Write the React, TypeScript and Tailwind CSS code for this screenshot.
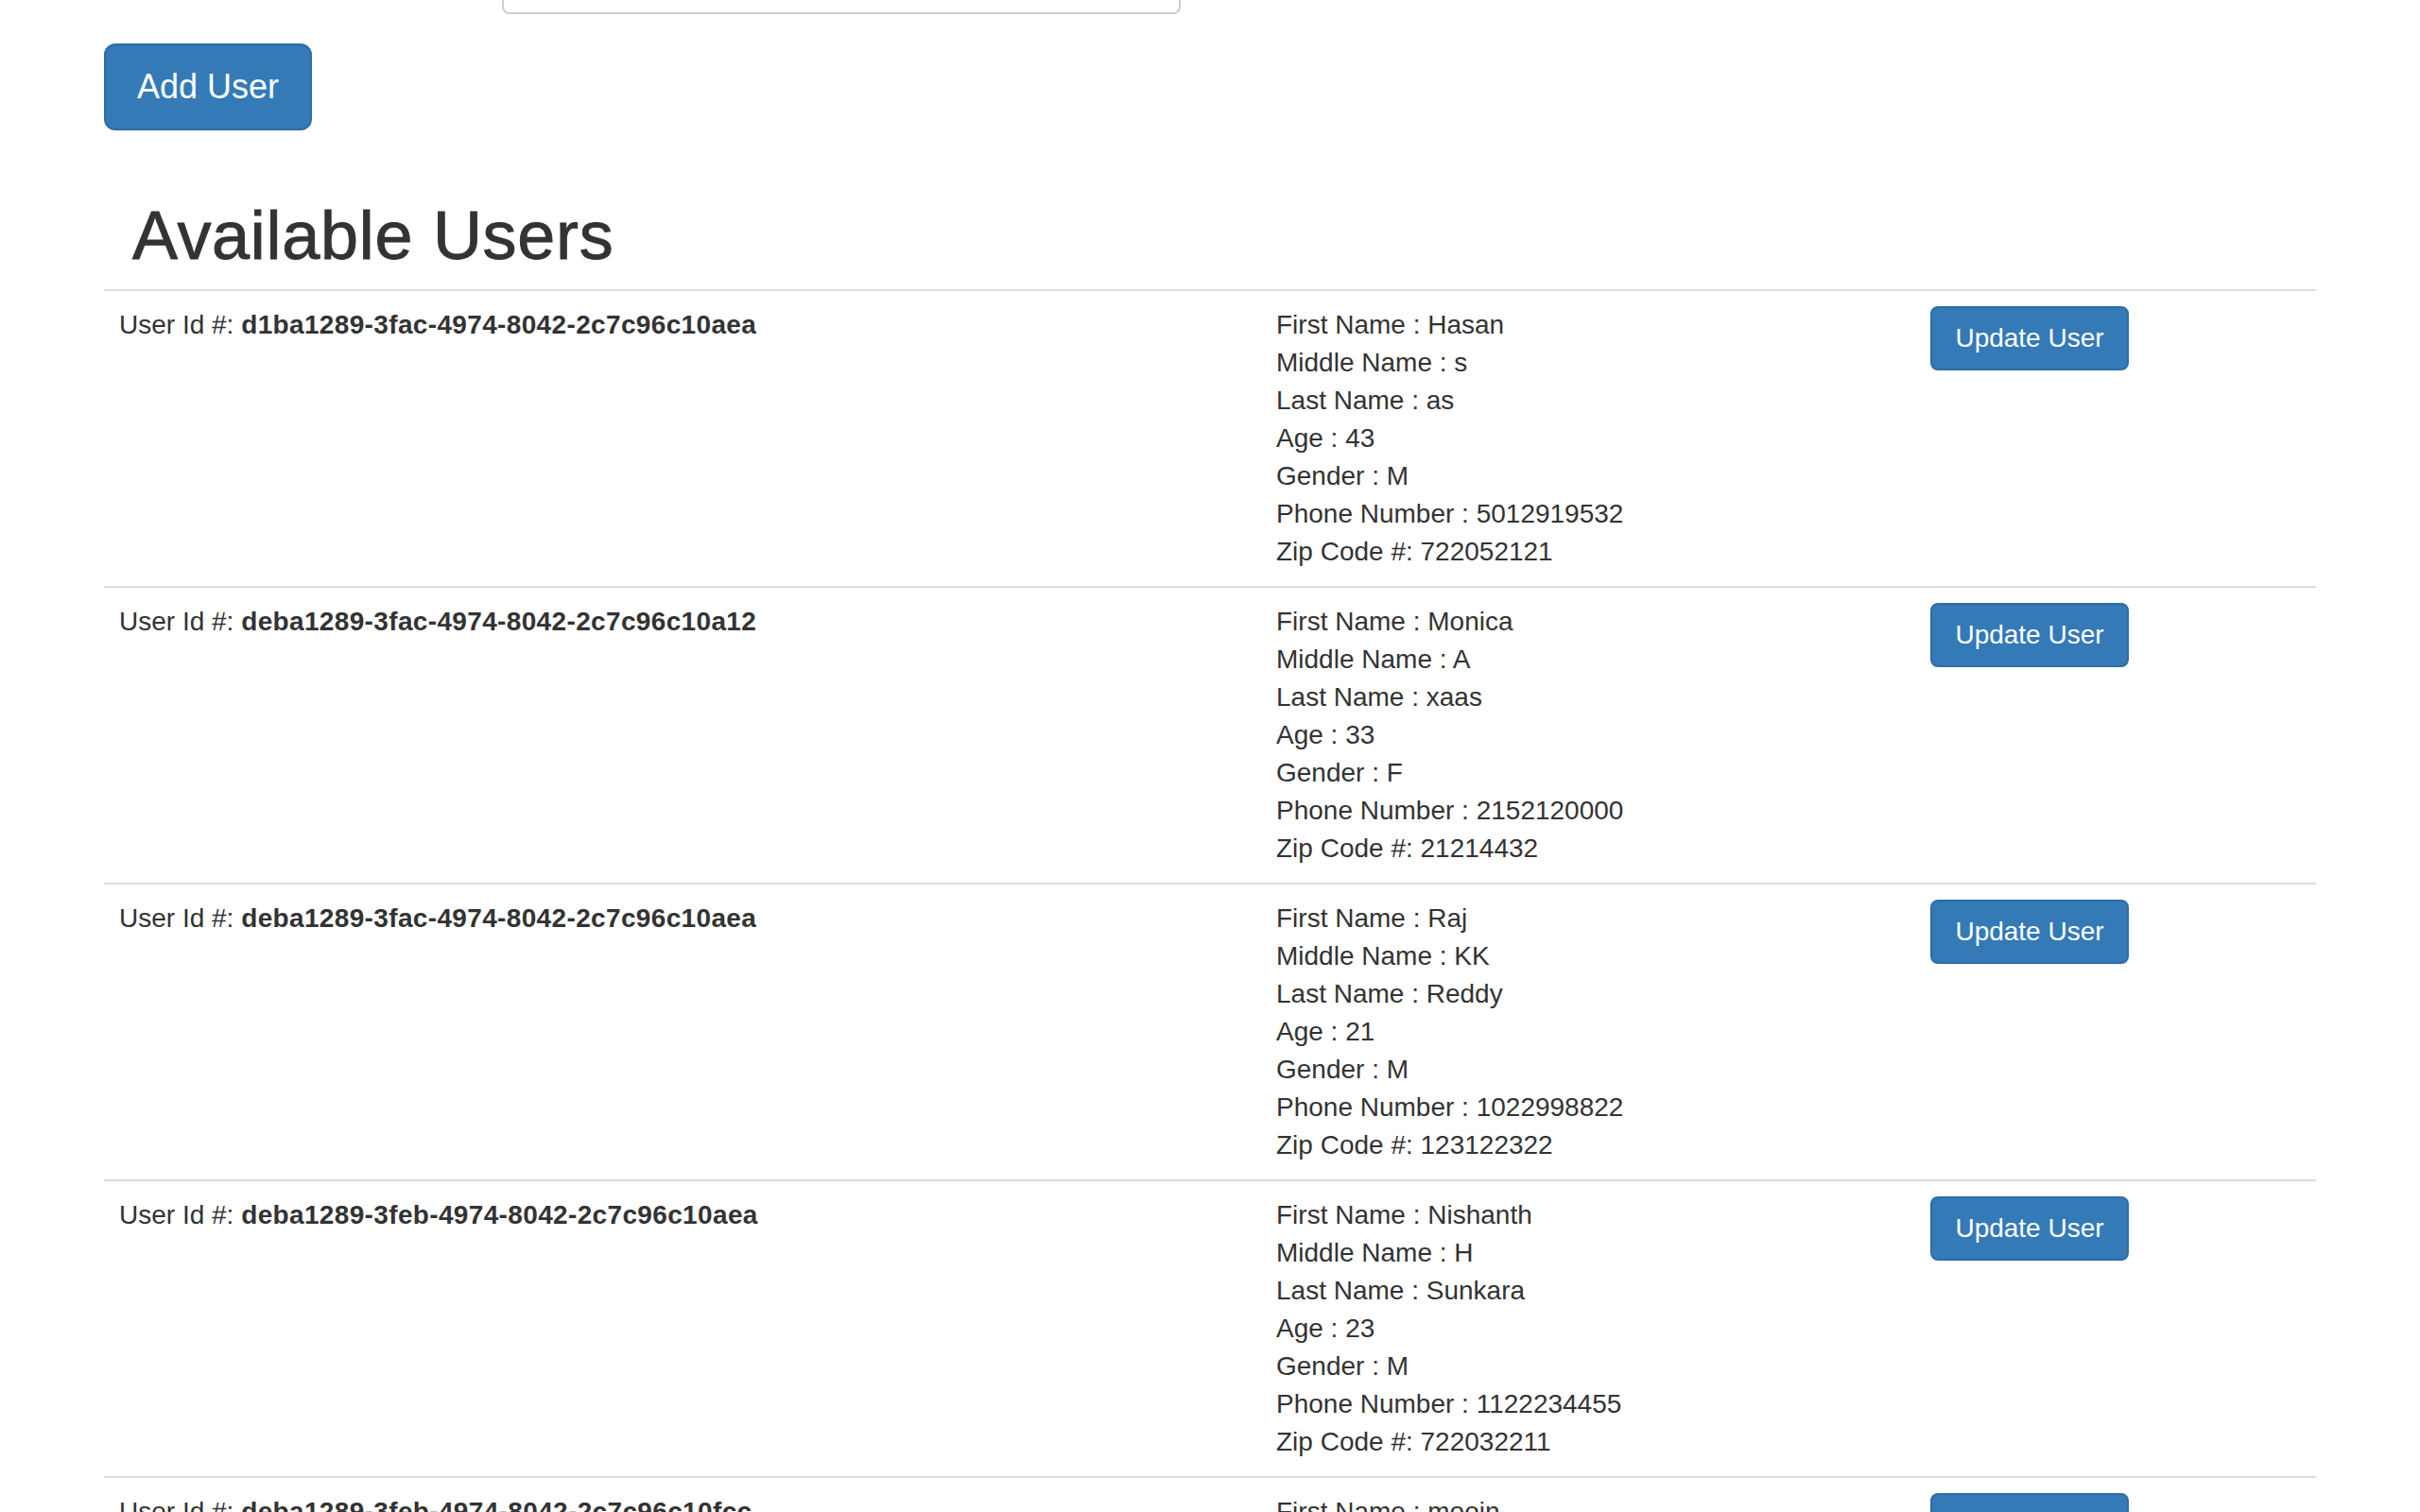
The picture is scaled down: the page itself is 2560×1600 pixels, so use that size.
type User = {
  id: string;
  first: string;
  middle: string;
  last: string;
  age: string;
  gender: string;
  phone: string;
  zip: string;
};

const users: User[] = [
  {
    id: "d1ba1289-3fac-4974-8042-2c7c96c10aea",
    first: "Hasan",
    middle: "s",
    last: "as",
    age: "43",
    gender: "M",
    phone: "5012919532",
    zip: "722052121",
  },
  {
    id: "deba1289-3fac-4974-8042-2c7c96c10a12",
    first: "Monica",
    middle: "A",
    last: "xaas",
    age: "33",
    gender: "F",
    phone: "2152120000",
    zip: "21214432",
  },
  {
    id: "deba1289-3fac-4974-8042-2c7c96c10aea",
    first: "Raj",
    middle: "KK",
    last: "Reddy",
    age: "21",
    gender: "M",
    phone: "1022998822",
    zip: "123122322",
  },
  {
    id: "deba1289-3feb-4974-8042-2c7c96c10aea",
    first: "Nishanth",
    middle: "H",
    last: "Sunkara",
    age: "23",
    gender: "M",
    phone: "1122234455",
    zip: "722032211",
  },
  {
    id: "deba1289-3feb-4974-8042-2c7c96c10fcc",
    first: "mooin",
    middle: "K",
    last: "Shaik",
    age: "27",
    gender: "M",
    phone: "2014567890",
    zip: "722041122",
  },
];

function UserRow({ user }: { user: User }) {
  return (
    <div className="grid grid-cols-[1224px_692px_424px] border-t-2 border-[#ddd]">
      <div className="p-4">
        User Id #: <b className="font-bold tracking-[0.35px]">{user.id}</b>
      </div>
      <div className="p-4">
        <div>First Name : {user.first}</div>
        <div>Middle Name : {user.middle}</div>
        <div>Last Name : {user.last}</div>
        <div>Age : {user.age}</div>
        <div>Gender : {user.gender}</div>
        <div>Phone Number : {user.phone}</div>
        <div>Zip Code #: {user.zip}</div>
      </div>
      <div className="p-4">
        <button className="h-[68px] w-[210px] rounded-[8px] border-2 border-[#2e6da4] bg-[#337ab7] text-[28px] leading-[40px] text-white">
          Update User
        </button>
      </div>
    </div>
  );
}

export default function App() {
  return (
    <div className="min-h-screen bg-white font-['Liberation_Sans',Arial,sans-serif] text-[28px] leading-[40px] text-[#333]">
      <div className="px-[110px]">
        {/* search box, scrolled mostly out of view */}
        <div className="ml-[421px] h-[15px] w-[718px] rounded-b-[8px] border-2 border-t-0 border-[#ccc]" />

        <button className="mt-[31px] h-[92px] w-[220px] rounded-[12px] border-2 border-[#2e6da4] bg-[#337ab7] text-[36px] leading-[48px] text-white">
          Add User
        </button>

        <h1 className="mt-[72px] mb-[17px] pl-[30px] text-[72px] leading-[79px] font-normal tracking-[0.7px] text-[#333] [-webkit-text-stroke:0.9px_#333]">
          Available Users
        </h1>

        <div>
          {users.map((u, i) => (
            <UserRow key={i} user={u} />
          ))}
        </div>
      </div>
    </div>
  );
}
